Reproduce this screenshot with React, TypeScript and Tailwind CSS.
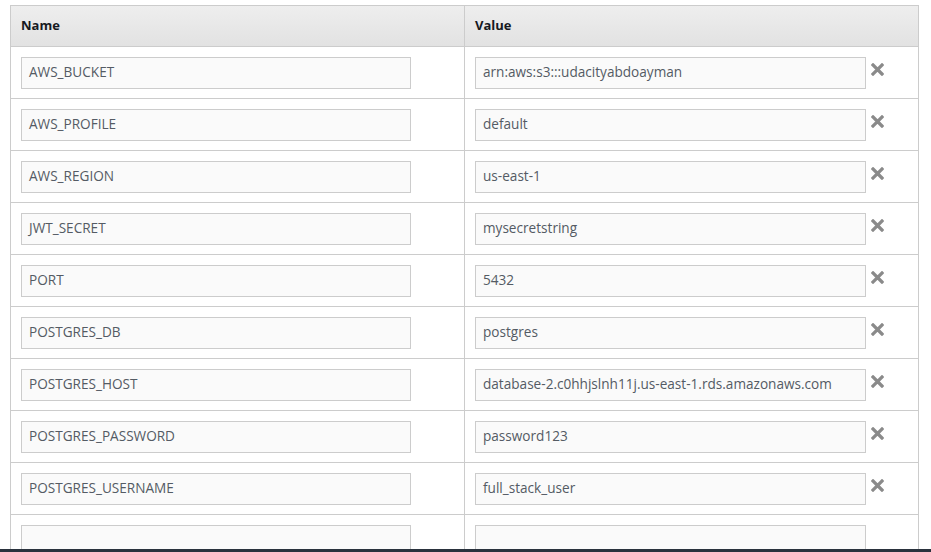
import React from "react";

const rows: [string, string][] = [
  ["AWS_BUCKET", "arn:aws:s3:::udacityabdoayman"],
  ["AWS_PROFILE", "default"],
  ["AWS_REGION", "us-east-1"],
  ["JWT_SECRET", "mysecretstring"],
  ["PORT", "5432"],
  ["POSTGRES_DB", "postgres"],
  ["POSTGRES_HOST", "database-2.c0hhjslnh11j.us-east-1.rds.amazonaws.com"],
  ["POSTGRES_PASSWORD", "password123"],
  ["POSTGRES_USERNAME", "full_stack_user"],
  ["", ""],
];

function XIcon() {
  return (
    <svg width="13" height="13" viewBox="0 0 13 13" className="block">
      <path d="M2 2 L11 11 M11 2 L2 11" stroke="#8a8a8a" strokeWidth="3.2" strokeLinecap="square" />
    </svg>
  );
}

export default function App() {
  return (
    <div
      className="relative w-[931px] h-[552px] overflow-hidden bg-white"
      style={{ fontFamily: '"Open Sans", "Noto Sans", sans-serif' }}
    >
      <div className="ml-[10px] mt-[5px] w-[909px] border border-[#cccccc]">
        <div className="flex h-[41px] bg-gradient-to-b from-[#eeeeee] to-[#e2e2e2] border-b border-[#cccccc]">
          <div className="w-[454px] border-r border-[#cccccc] pl-[10px] flex items-center text-[13px] font-bold text-[#16191f]">
            Name
          </div>
          <div className="flex-1 pl-[10px] flex items-center text-[13px] font-bold text-[#16191f]">
            Value
          </div>
        </div>
        {rows.map(([k, v], i) => (
          <div key={i} className="flex h-[52px] border-b border-[#cccccc] last:border-b-0">
            <div className="w-[454px] border-r border-[#cccccc] pl-[10px] pt-[10px]">
              <div className="w-[390px] h-[32px] border border-[#cccccc] bg-[#fafafa] pl-[7px] pb-[2px] flex items-center text-[13.6px] text-[#545b64]">
                {k}
              </div>
            </div>
            <div className="flex-1 pl-[10px] pt-[10px] flex items-start">
              <div className="w-[391px] h-[32px] border border-[#cccccc] bg-[#fafafa] pl-[7px] pb-[2px] flex items-center text-[13.6px] text-[#545b64]">
                {v}
              </div>
              {i < 9 && (
                <div className="ml-[5px] mt-[6px]">
                  <XIcon />
                </div>
              )}
            </div>
          </div>
        ))}
      </div>
      <div className="absolute left-0 bottom-0 w-full h-[3px] bg-[#2a323d]" />
    </div>
  );
}
